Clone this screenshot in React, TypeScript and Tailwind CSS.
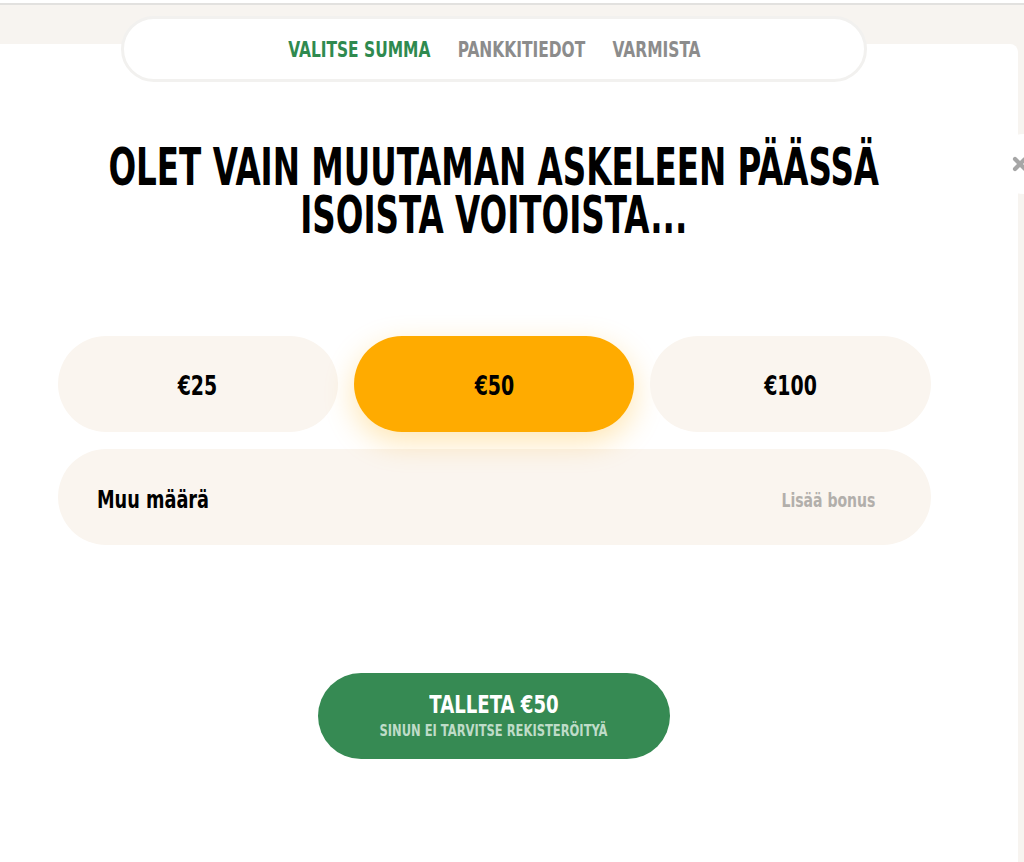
import { X } from "lucide-react";

const amounts = ["€25", "€50", "€100"];

export default function App() {
  return (
    <div className="relative h-[862px] w-full overflow-hidden bg-[#f7f4f0] font-['DejaVu_Sans_Condensed','DejaVu_Sans',sans-serif]">
      <div className="h-[3px] bg-white" />
      <div className="h-[2px] bg-[#e2e1df]" />
      <div className="mt-[39px] mr-[6px] flow-root h-[818px] rounded-tr-lg bg-white">
        <div className="w-[988px]">
          <nav className="mx-auto -mt-[28px] flex h-[66px] w-[746px] items-center justify-center rounded-full border-[3px] border-[#f2f1ef] bg-white">
            <div className="flex shrink-0 scale-x-[0.78] gap-[35px] whitespace-nowrap text-[22px] font-bold">
              <span className="text-[#2f8a4f]">VALITSE SUMMA</span>
              <span className="text-[#8c8c8c]">PANKKITIEDOT</span>
              <span className="text-[#8c8c8c]">VARMISTA</span>
            </div>
          </nav>

          <div className="mt-[62px] flex justify-center">
            <h1 className="shrink-0 scale-x-[0.71] whitespace-nowrap text-center text-[51px] leading-[48px] font-bold text-black">
              OLET VAIN MUUTAMAN ASKELEEN PÄÄSSÄ
              <br />
              ISOISTA VOITOISTA...
            </h1>
          </div>

          <div className="mx-auto mt-[96px] w-[873px]">
            <div className="grid grid-cols-3 gap-4">
              {amounts.map((a) => (
                <button
                  key={a}
                  className={
                    a === "€50"
                      ? "flex h-24 items-center justify-center rounded-full bg-[#ffab00] pt-[5px] text-black shadow-[0_10px_30px_rgba(255,171,0,0.3)]"
                      : "flex h-24 items-center justify-center rounded-full bg-[#faf5ef] pt-[5px] text-black"
                  }
                >
                  <span className="scale-x-[0.81] text-[26px] font-bold">{a}</span>
                </button>
              ))}
            </div>
            <div className="mt-[17px] flex h-24 items-center justify-between rounded-full bg-[#faf5ef] pt-[6px] pl-[39px] pr-[55px]">
              <span className="origin-left scale-x-[0.82] text-2xl font-bold text-black">Muu määrä</span>
              <span className="origin-right scale-x-[0.78] text-[20px] font-bold text-[#b2afab]">Lisää bonus</span>
            </div>
          </div>

          <div className="mt-[128px] flex justify-center">
            <button className="flex h-[86px] w-[352px] flex-col items-center justify-center rounded-full bg-[#368a53]">
              <span className="scale-x-[0.84] text-2xl leading-7 font-bold text-white">TALLETA €50</span>
              <span className="mt-0.5 scale-x-[0.8] text-base leading-5 font-bold text-[#bfdcc8]">
                SINUN EI TARVITSE REKISTERÖITYÄ
              </span>
            </button>
          </div>
        </div>
      </div>

      <div className="absolute right-[-30px] top-[134px] flex h-[60px] w-[60px] items-center justify-center rounded-full bg-white">
        <X className="h-5 w-5 -translate-x-1 text-[#a6a6a6]" strokeWidth={5} />
      </div>
    </div>
  );
}
